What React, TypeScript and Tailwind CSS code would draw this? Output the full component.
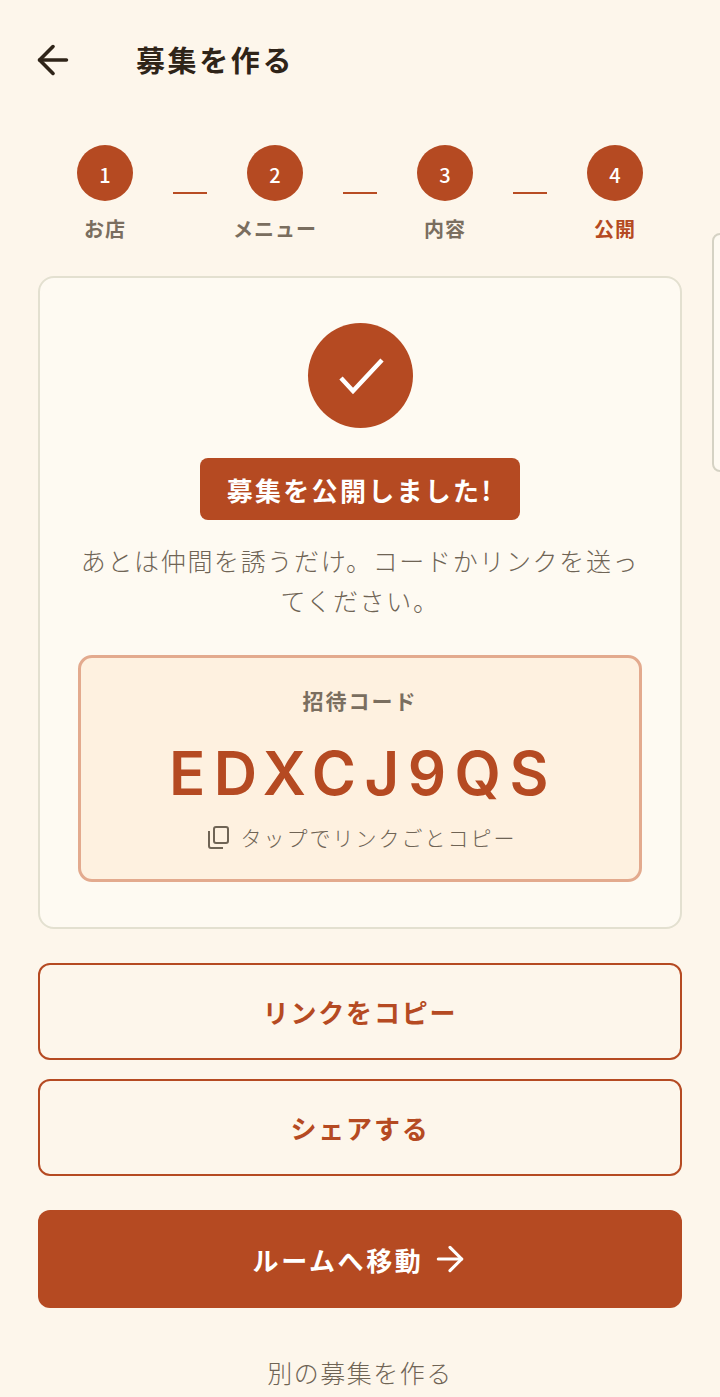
import { ArrowLeft, ArrowRight } from 'lucide-react';

const FONT = "font-['Noto_Sans_CJK_JP','Noto_Sans',sans-serif]";

const steps = [
  { n: 1, label: 'お店' },
  { n: 2, label: 'メニュー' },
  { n: 3, label: '内容' },
  { n: 4, label: '公開' },
];

function Stepper() {
  return (
    <div className="flex items-start justify-center mt-[57px]">
      {steps.map((s, i) => (
        <div key={s.n} className="flex items-start">
          {i > 0 && <div className="w-[34px] h-[2px] bg-[#b84c23] mt-[47px] mx-[20px]" />}
          <div className="w-[96px] flex flex-col items-center">
            <div className="w-[56px] h-[56px] pt-[3px] rounded-full bg-[#b54a22] text-white flex items-center justify-center text-[20px] font-medium">
              {s.n}
            </div>
            <div className={`mt-[14px] text-[20px] leading-[28px] font-bold tracking-[1px] whitespace-nowrap ${s.n === 4 ? 'text-[#b54a22]' : 'text-[#7a6e5f]'}`}>
              {s.label}
            </div>
          </div>
        </div>
      ))}
    </div>
  );
}

function OutlineButton({ label }: { label: string }) {
  return (
    <button className="w-full h-[97px] rounded-[12px] border-2 border-[#b54a22] text-[#b54a22] text-[26px] font-bold tracking-[1.8px] flex items-center justify-center">
      {label}
    </button>
  );
}

export default function App() {
  return (
    <div className={`relative w-[720px] h-[1397px] overflow-hidden bg-[#fdf6eb] ${FONT}`}>
      <header className="flex items-center h-[56px] mt-[32px] pl-[30px]">
        <ArrowLeft size={46} strokeWidth={1.9} className="text-[#2f2418]" />
        <h1 className="ml-[60px] text-[29px] font-bold tracking-[2.6px] text-[#2f2418]">募集を作る</h1>
      </header>

      <Stepper />

      <main className="px-[38px] mt-[33px]">
        <section className="h-[653px] rounded-[16px] border-2 border-[#e3e0d0] bg-[#fefaf2] px-[38px] pt-[45px] flex flex-col items-center">
          <div className="w-[105px] h-[105px] rounded-full bg-[#b54a22] flex items-center justify-center">
            <svg width="56" height="56" viewBox="0 0 56 56" fill="none" stroke="white" strokeWidth="4.5">
              <path d="M9 30L21 43L50 12" />
            </svg>
          </div>
          <div className="mt-[30px] h-[62px] px-[27px] rounded-[8px] bg-[#b54a22] text-white text-[26px] font-bold tracking-[2.3px] flex items-center">
            募集を公開しました!
          </div>
          <p className="mt-[20px] text-center text-[25px] leading-[40px] font-light tracking-[1.65px] text-[#6f6455]">
            あとは仲間を誘うだけ。コードかリンクを送ってください。
          </p>
          <div className="mt-[35px] w-full h-[227px] rounded-[14px] border-[3px] border-[#e3aa8e] bg-[#fef1e0] flex flex-col items-center pt-[26px]">
            <div className="text-[21px] leading-[32px] font-bold tracking-[2px] text-[#7a6e5f]">招待コード</div>
            <div className="mt-[21px] ml-[6px] font-['Inter',sans-serif] text-[60px] leading-[72px] font-semibold tracking-[8.5px] text-[#b54a22]">EDXCJ9QS</div>
            <div className="mt-[12px] ml-[4px] flex items-center gap-[12px] text-[#6f6455]">
              <svg width="21" height="23" viewBox="0 0 21 23" fill="none" stroke="currentColor" strokeWidth="2">
                <rect x="6" y="1" width="14" height="16" rx="2" />
                <path d="M1 5V20a2 2 0 0 0 2 2H15" />
              </svg>
              <span className="text-[21px] leading-[32px] font-light tracking-[2px]">タップでリンクごとコピー</span>
            </div>
          </div>
        </section>

        <div className="mt-[34px] flex flex-col gap-[19px]">
          <OutlineButton label="リンクをコピー" />
          <OutlineButton label="シェアする" />
        </div>

        <button className="mt-[34px] w-full h-[98px] pl-[3px] rounded-[12px] bg-[#b54a22] text-white text-[26px] font-bold tracking-[2.6px] flex items-center justify-center gap-[7px]">
          ルームへ移動
          <ArrowRight size={40} strokeWidth={1.9} />
        </button>

        <div className="mt-[46px] text-center text-[25px] leading-[36px] font-light tracking-[1.5px] text-[#6f6455]">別の募集を作る</div>
      </main>

      <div className="absolute left-[712px] top-[233px] w-[20px] h-[239px] rounded-[8px] border-2 border-[#d5d2c4] bg-[#fefaf2]" />
    </div>
  );
}
